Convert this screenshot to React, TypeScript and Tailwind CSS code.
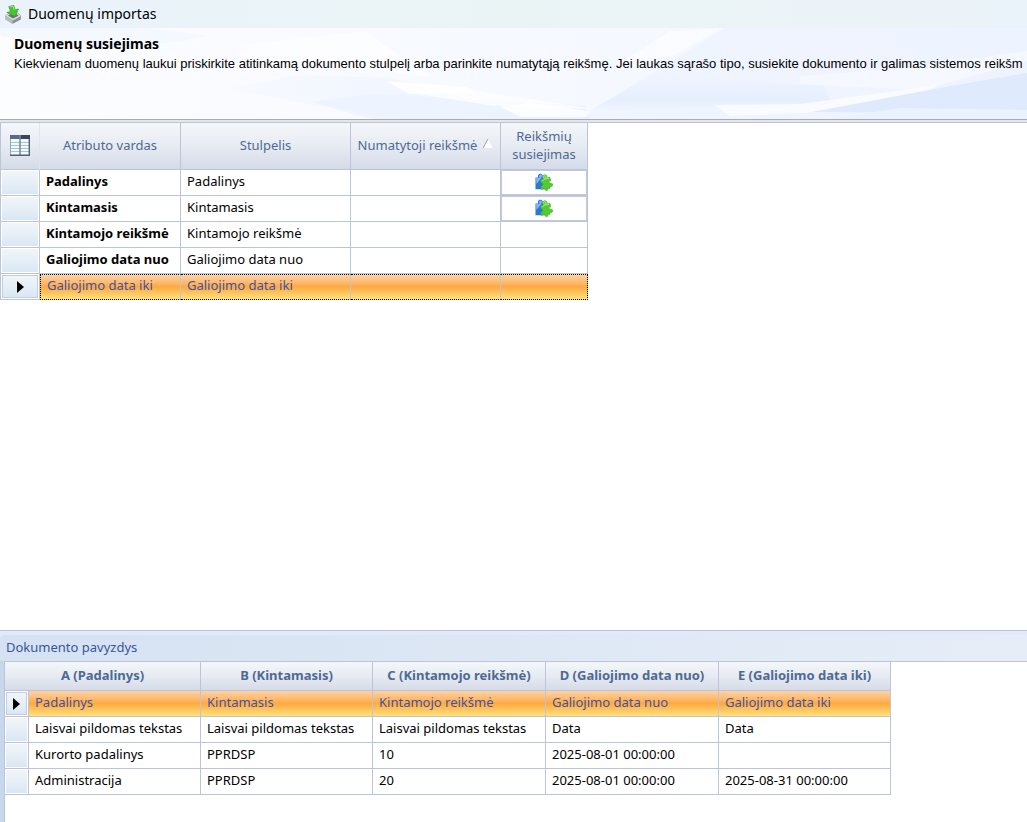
import clsx from "clsx";

type Attribute = {
  name: string;
  column: string;
  fallback?: string;
  mappable?: boolean;
  active?: boolean;
};

const ATTRIBUTES: Attribute[] = [
  { name: "Padalinys", column: "Padalinys", mappable: true },
  { name: "Kintamasis", column: "Kintamasis", mappable: true },
  { name: "Kintamojo reikšmė", column: "Kintamojo reikšmė" },
  { name: "Galiojimo data nuo", column: "Galiojimo data nuo" },
  { name: "Galiojimo data iki", column: "Galiojimo data iki", active: true },
];

const SAMPLE_COLUMNS = [
  "A (Padalinys)",
  "B (Kintamasis)",
  "C (Kintamojo reikšmė)",
  "D (Galiojimo data nuo)",
  "E (Galiojimo data iki)",
];

const SAMPLE_ROWS = [
  ["Padalinys", "Kintamasis", "Kintamojo reikšmė", "Galiojimo data nuo", "Galiojimo data iki"],
  ["Laisvai pildomas tekstas", "Laisvai pildomas tekstas", "Laisvai pildomas tekstas", "Data", "Data"],
  ["Kurorto padalinys", "PPRDSP", "10", "2025-08-01 00:00:00", ""],
  ["Administracija", "PPRDSP", "20", "2025-08-01 00:00:00", "2025-08-31 00:00:00"],
];

const HEAD =
  "border-r border-b border-[#bcc4d8] bg-linear-to-b from-[#f4f7fa] via-[#e7ebf2] to-[#d5dbe8] px-0 pt-0 pb-0.5 text-[#4d6a94]";
const CELL = "h-[26px] border-r border-b border-[#bcc4d8] px-1.5 pt-0 pb-1 whitespace-nowrap";
const INDICATOR = "h-[26px] border-r border-b border-[#bcc4d8] p-px";
const SELECTED =
  "bg-linear-to-b from-[#fed3a5] from-0% via-[#ffa93f] via-50% to-[#fee17c] to-100% text-[#3c53ab]";
// focus rectangle of the active row: dotted top and bottom, solid column lines
const FOCUS = "border-t border-t-black border-b-black [border-block-style:dotted]";

function ImportIcon() {
  return (
    <svg width="18" height="19" viewBox="0 0 18 19" aria-hidden="true">
      <path d="M1 10.500 5 8l9-.2 3 3-.2 3.700-8 4.300L1 14z" fill="#8c8f92" />
      <path d="m1 10.500 4-2 8.500-.5L17 11l-8 4.500z" fill="#d9dcde" />
      <path d="m1 10.500 7.500 4.800V19L1 14z" fill="#b9bcbf" />
      <path d="m4 10.500 2-1.200 6.500-.2 2 1.700-5.600 2.700z" fill="#6e7275" />
      <path d="M4.800 1.500 9.800.3l1.400 4.500 3.300-.8-3.500 7.500L2.800 7.500l3.600-1z" fill="#46c531" stroke="#2d9a22" strokeWidth=".6" />
      <path d="m5.800 1.900 3.400-.8 1 4" fill="none" stroke="#9bea83" />
    </svg>
  );
}

function ColumnsIcon() {
  return (
    <svg width="20" height="21" viewBox="0 0 20 21" aria-hidden="true">
      <path d="M.5.5h19v20H.5z" fill="#f2fafd" stroke="#8fa9bc" />
      <path d="M0 0h20v4H0z" fill="#566c84" />
      <path d="M11 0h9v4h-9z" fill="#33475e" />
      <path d="M1 7.500h18M1 10.500h18M1 13.500h18M1 16.500h18" stroke="#a9c3d2" />
      <path d="M10 0v20" stroke="#6b86a0" strokeWidth="1.500" />
      <path d="M19.300 4v16.300H0" fill="none" stroke="#4e6377" strokeWidth="1.400" />
    </svg>
  );
}

function PuzzleIcon() {
  return (
    <svg width="18" height="18" viewBox="0 0 18 18" aria-hidden="true">
      <path d="M.5 4.500h2.700C2.200 1.800 4 .5 5.500.7 7.500.8 8.200 2.500 7.400 4.200H10v12H.5z" fill="#2b78d2" />
      <path d="M1 5h3.500c-1-3 .3-3.700 1.300-3.600C7 1.500 7.200 3 6.300 5L1.500 11z" fill="#7cb9f2" />
      <path
        d="M5.500 7.300 8.300 6C6.800 3.600 7.800 2 9.500 1.800c2-.2 3 1.200 2.400 3.200l3-.8 1 3.700c-2-.3-2.300 1.600-1.100 2.100 1.400.7 2.700 0 3 1.500.2 1.500-1.300 2.600-3 1.700l.3 2.100-2.500.7c.6 1.500-.7 2-1.700 1.500-1-.5-.7-1.700-1.600-1.900-1.600-.1-1.600 1.200-2.900.8l-.7-3.200C8.300 12.800 8.500 10 6 10z"
        fill="#53ca34"
        stroke="#349e2a"
        strokeWidth=".5"
      />
      <path d="M6.500 7.800 9.700 6.400C8 4 8.600 2.700 9.800 2.600c1.300 0 1.400 1.700.8 3.400l3.400-.6" fill="none" stroke="#a5ec7c" />
    </svg>
  );
}

function BannerArt() {
  return (
    <svg
      className="absolute inset-0 h-full w-full"
      viewBox="0 0 1027 91"
      preserveAspectRatio="none"
      aria-hidden="true"
    >
      <defs>
        <linearGradient id="sky" x1="0" x2="1" y1="0" y2="0">
          <stop offset="0" stopColor="#fcfdff" />
          <stop offset=".5" stopColor="#f6f9ff" />
          <stop offset="1" stopColor="#f0f5ff" />
        </linearGradient>
        <linearGradient id="fade" x1="0" x2="1" y1="0" y2="0">
          <stop offset="0" stopColor="#f0f5ff" stopOpacity=".3" />
          <stop offset="1" stopColor="#e9f1ff" />
        </linearGradient>
        <linearGradient id="low" x1="0" x2="0" y1="0" y2="1">
          <stop offset="0" stopColor="#e6effe" stopOpacity="0" />
          <stop offset=".7" stopColor="#e6effe" />
          <stop offset="1" stopColor="#f2f7ff" />
        </linearGradient>
      </defs>
      <path d="M0 0h1027v91H0z" fill="url(#sky)" />
      <path d="M0 0h150l60 8-90 14L0 8z" fill="#f4f8ff" />
      <path d="m240 17 125-14 16 12 50 34-190-20z" fill="#fdfeff" opacity=".7" />
      <path d="M225 60 300 47l90 3 75 20 120 8 5 13H400l-90-15z" fill="url(#fade)" />
      <path d="m312 74 60-8 90 5 50 16-60 4H372z" fill="#ecf2ff" opacity=".8" />
      <path d="m588 84 75-45L725 0h302v91H588z" fill="#ecf3ff" opacity=".65" />
      <path d="m588 84 65-38 170 12 10 20-130 5z" fill="url(#low)" />
      <path d="m385 53 80 6 10 4-65 3z" fill="#fff" opacity=".9" />
      <path d="m410 65 60-3 125 19-100-3z" fill="#fff" opacity=".7" />
      <path d="m500 79 30-4 60 8-4 6h-65z" fill="#fff" opacity=".8" />
      <path d="m670 3 52-3-47 27-55 8z" fill="#fff" opacity=".5" />
      <path d="m800 48 120-9 107-16v10L920 62l-120-6z" fill="#f6faff" opacity=".8" />
      <path d="m715 77 85-1 140-19-15 7-120 21-75 3z" fill="#fbfdff" opacity=".8" />
      <path d="m812 84 133-25 82-14v38l-90 2z" fill="#dfeafd" />
      <path d="m900 80 127 2v9H830z" fill="#eaf2ff" />
    </svg>
  );
}

function RowIndicator({ current }: { current?: boolean }) {
  return (
    <td className={INDICATOR}>
      <div
        className={clsx(
          "flex h-[23px] items-center justify-center bg-linear-to-b from-[#f1f5f9] via-[#e4edf6] via-60% to-[#d9e7f4]",
          current && "border border-[#c3cddc]",
        )}
      >
        {current && (
          <svg width="7" height="12" viewBox="0 0 7 12" aria-hidden="true">
            <path d="M0 0v12l7-6z" fill="#000" />
          </svg>
        )}
      </div>
    </td>
  );
}

function AttributeGrid() {
  return (
    <table className="table-fixed border-separate border-spacing-0 border-l border-[#bcc4d8]">
      <colgroup>
        <col className="w-[39px]" />
        <col className="w-[141px]" />
        <col className="w-[170px]" />
        <col className="w-[150px]" />
        <col className="w-[87px]" />
      </colgroup>
      <thead>
        <tr className="h-[47px] leading-[18px]">
          <th className={clsx(HEAD, "border-r-[#dfe4ee]")}>
            <div className="flex justify-center">
              <ColumnsIcon />
            </div>
          </th>
          <th className={clsx(HEAD, "font-normal")}>Atributo vardas</th>
          <th className={clsx(HEAD, "font-normal")}>Stulpelis</th>
          <th className={clsx(HEAD, "font-normal")}>
            <div className="flex items-center justify-center gap-1.5 whitespace-nowrap">
              Numatytoji reikšmė
              <svg width="10" height="13" viewBox="0 0 10 13" aria-hidden="true">
                <path d="M5 0 10 9H0z" fill="#fff" />
                <path d="M0 9 5 0" stroke="#9ca6b8" />
              </svg>
            </div>
          </th>
          <th className={clsx(HEAD, "font-normal")}>
            Reikšmių
            <br />
            susiejimas
          </th>
        </tr>
      </thead>
      <tbody>
        {ATTRIBUTES.map((a) => (
          <tr key={a.name}>
            <RowIndicator current={a.active} />
            <td
              className={clsx(
                CELL,
                a.active ? [SELECTED, FOCUS, "border-l border-l-black [border-left-style:dotted]"] : "font-bold",
              )}
            >
              {a.name}
            </td>
            <td className={clsx(CELL, a.active && [SELECTED, FOCUS])}>{a.column}</td>
            <td className={clsx(CELL, a.active && [SELECTED, FOCUS])}>{a.fallback}</td>
            <td
              className={clsx(
                "h-[26px] border-r border-b border-[#bcc4d8] p-0",
                a.active && [SELECTED, FOCUS, "border-r-black [border-right-style:dotted]"],
              )}
            >
              {a.mappable && (
                <button
                  type="button"
                  aria-label={`Susieti reikšmes: ${a.name}`}
                  className="flex h-[25px] w-full items-center justify-center border border-[#c3c9dc] bg-white pb-0.5"
                >
                  <PuzzleIcon />
                </button>
              )}
            </td>
          </tr>
        ))}
      </tbody>
    </table>
  );
}

function SampleGrid() {
  return (
    <table className="table-fixed border-separate border-spacing-0">
      <colgroup>
        <col className="w-6" />
        <col className="w-[172px]" />
        <col className="w-[172px]" />
        <col className="w-[173px]" />
        <col className="w-[173px]" />
        <col className="w-[172px]" />
      </colgroup>
      <thead>
        <tr className="h-[29px]">
          {SAMPLE_COLUMNS.map((c, i) => (
            <th key={c} colSpan={i === 0 ? 2 : 1} className={clsx(HEAD, "font-bold whitespace-nowrap")}>
              {c}
            </th>
          ))}
        </tr>
      </thead>
      <tbody>
        {SAMPLE_ROWS.map((row, r) => (
          <tr key={row[0]}>
            <RowIndicator current={r === 0} />
            {row.map((value, i) => (
              <td key={i} className={clsx(CELL, r === 0 && SELECTED)}>
                {value}
              </td>
            ))}
          </tr>
        ))}
      </tbody>
    </table>
  );
}

export default function App() {
  return (
    <div className="flex min-h-screen flex-col overflow-hidden bg-white font-['Noto_Sans',sans-serif] text-[13px] leading-5 text-black">
      <header className="flex h-7 items-center gap-1.5 bg-linear-to-r from-[#eaf3fb] via-[#ebf4f5] to-[#ebf3fa] px-1 text-[14px]">
        <ImportIcon />
        <h1>Duomenų importas</h1>
      </header>

      <section className="relative h-[92px] overflow-hidden border-b border-[#a9abad]">
        <BannerArt />
        <div className="relative px-3.5 pt-1.5">
          <h2 className="text-[14px] font-bold">Duomenų susiejimas</h2>
          <p className="font-['Liberation_Sans',Arial,sans-serif] text-[13px] whitespace-nowrap">
            Kiekvienam duomenų laukui priskirkite atitinkamą dokumento stulpelį arba parinkite numatytąją reikšmę. Jei
            laukas sąrašo tipo, susiekite dokumento ir galimas sistemos reikšm
          </p>
        </div>
      </section>

      <main className="flex-1 border-t-2 border-[#e3e5e8]">
        <div className="border-t border-[#bcc4d8]">
          <AttributeGrid />
        </div>
      </main>

      <section className="border-t border-[#bcc4d8] bg-[#e0eafc] pt-1">
        <div className="rounded-tl-md bg-[#c8d8ec]">
          <h2 className="h-[26px] rounded-tl-md bg-linear-to-r from-[#d5e2f2] to-[#e6edf7] px-1.5 leading-6 text-[#36569c]">
            Dokumento pavyzdys
          </h2>
          <div className="ml-1 border-t border-l border-[#bcc4d8] bg-white pb-[27px]">
            <SampleGrid />
          </div>
        </div>
      </section>
    </div>
  );
}
